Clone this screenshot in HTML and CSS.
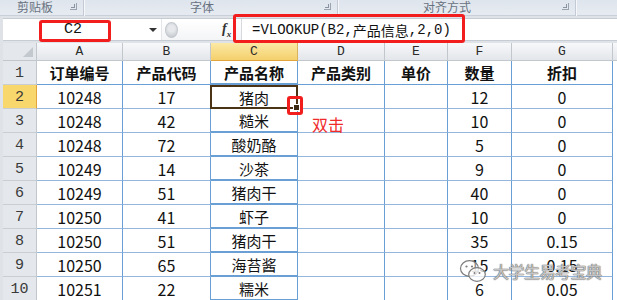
FILE: index.html
```html
<!DOCTYPE html>
<html lang="zh">
<head>
<meta charset="utf-8">
<link rel="stylesheet" href="styles.css">
</head>
<body>
<div class="app">
  <div class="ribbon">
    <div class="grp g1"><span class="glabel">剪贴板</span><span class="launch"></span></div>
    <div class="grp g2"><span class="glabel">字体</span><span class="launch"></span></div>
    <div class="grp g3"><span class="glabel">对齐方式</span><span class="launch"></span></div>
    <div class="grp g4"></div>
  </div>
  <div class="fbar">
    <div class="namebox"><span class="nbtext">C2</span><span class="dd"></span></div>
    <div class="fctrl"><span class="knob"></span><span class="fx">f<sub>x</sub></span></div>
    <div class="formula">=VLOOKUP(B2,<span class="cjk">产品信息</span>,2,0)</div>
  </div>
  <div class="sheet">
    <div class="corner"></div><div class="ch">A</div><div class="ch">B</div><div class="ch ch-sel">C</div><div class="ch">D</div><div class="ch">E</div><div class="ch">F</div><div class="ch">G</div><div class="ch ch-rest"></div>

    <div class="rh">1</div><div class="c hd">订单编号</div><div class="c hd">产品代码</div><div class="c hd cc">产品名称</div><div class="c hd">产品类别</div><div class="c hd">单价</div><div class="c hd">数量</div><div class="c hd">折扣</div><div class="c rest"></div>

    <div class="rh rh-sel">2</div><div class="c n">10248</div><div class="c n">17</div><div class="c cc sel">猪肉</div><div class="c"></div><div class="c"></div><div class="c n">12</div><div class="c n">0</div><div class="c rest"></div>

    <div class="rh">3</div><div class="c n">10248</div><div class="c n">42</div><div class="c cc">糙米</div><div class="c"></div><div class="c"></div><div class="c n">10</div><div class="c n">0</div><div class="c rest"></div>

    <div class="rh">4</div><div class="c n">10248</div><div class="c n">72</div><div class="c cc">酸奶酪</div><div class="c"></div><div class="c"></div><div class="c n">5</div><div class="c n">0</div><div class="c rest"></div>

    <div class="rh">5</div><div class="c n">10249</div><div class="c n">14</div><div class="c cc">沙茶</div><div class="c"></div><div class="c"></div><div class="c n">9</div><div class="c n">0</div><div class="c rest"></div>

    <div class="rh">6</div><div class="c n">10249</div><div class="c n">51</div><div class="c cc">猪肉干</div><div class="c"></div><div class="c"></div><div class="c n">40</div><div class="c n">0</div><div class="c rest"></div>

    <div class="rh">7</div><div class="c n">10250</div><div class="c n">41</div><div class="c cc">虾子</div><div class="c"></div><div class="c"></div><div class="c n">10</div><div class="c n">0</div><div class="c rest"></div>

    <div class="rh">8</div><div class="c n">10250</div><div class="c n">51</div><div class="c cc">猪肉干</div><div class="c"></div><div class="c"></div><div class="c n">35</div><div class="c n">0.15</div><div class="c rest"></div>

    <div class="rh">9</div><div class="c n">10250</div><div class="c n">65</div><div class="c cc">海苔酱</div><div class="c"></div><div class="c"></div><div class="c n">15</div><div class="c n">0.15</div><div class="c rest"></div>

    <div class="rh">10</div><div class="c n">10251</div><div class="c n">22</div><div class="c cc">糯米</div><div class="c"></div><div class="c"></div><div class="c n">6</div><div class="c n">0.05</div><div class="c rest"></div>
  </div>

  <div class="mark mark-name"></div>
  <div class="mark mark-formula"></div>
  <div class="mark mark-handle"></div>
  <div class="note">双击</div>
  <div class="wm">
    <svg class="wm-icon" width="28" height="24" viewBox="0 0 28 24">
      <ellipse cx="10.5" cy="9.5" rx="9" ry="7.8" fill="rgba(255,255,255,0.5)" stroke="#7d7d7d" stroke-width="1.2"/>
      <ellipse cx="18" cy="15.5" rx="8.3" ry="6.8" fill="rgba(255,255,255,0.75)" stroke="#7d7d7d" stroke-width="1.2"/>
      <circle cx="7.5" cy="7.5" r="1.1" fill="#7d7d7d"/>
      <circle cx="13" cy="7.5" r="1.1" fill="#7d7d7d"/>
      <circle cx="15.5" cy="14" r="1" fill="#7d7d7d"/>
      <circle cx="20.5" cy="14" r="1" fill="#7d7d7d"/>
    </svg>
    <span class="wm-text">大学生易考宝典</span>
  </div>
</div>
</body>
</html>
```
FILE: styles.css
```css
* { box-sizing: border-box; }
html, body { margin: 0; padding: 0; }
body {
  width: 617px;
  height: 300px;
  overflow: hidden;
  background: #dfe3e8;
  font-family: "Noto Sans CJK SC", "Noto Sans", sans-serif;
}
.app {
  position: relative;
  width: 617px;
  height: 300px;
  overflow: hidden;
}

/* ribbon group labels */
.ribbon {
  display: flex;
  height: 16px;
  background: linear-gradient(#dfe5ed, #e6ebf1);
  border-bottom: 1px solid #c9d0d9;
}
.grp {
  position: relative;
  height: 16px;
  border-right: 1px solid #c3cad3;
  box-shadow: 1px 0 0 #f5f7fa;
}
.g1 { width: 84px; }
.g2 { width: 254px; }
.g3 { width: 238px; }
.g4 { flex: 1; border-right: none; box-shadow: none; }
.glabel {
  display: block;
  font-size: 12px;
  line-height: 14px;
  color: #68727f;
  margin-top: 0;
}
.g1 .glabel { padding-left: 17px; }
.g2 .glabel { padding-left: 106px; }
.g3 .glabel { padding-left: 85px; }
.launch {
  position: absolute;
  right: 6px;
  top: 3px;
  width: 7px;
  height: 7px;
  border-right: 1px solid #9aa3ae;
  border-bottom: 1px solid #9aa3ae;
}
.launch::after {
  content: "";
  position: absolute;
  left: 1px;
  top: 1px;
  width: 3px;
  height: 3px;
  border-right: 1px solid #8a939f;
  border-bottom: 1px solid #8a939f;
}

/* formula bar */
.fbar {
  display: flex;
  height: 23px;
  margin-top: 2px;
  margin-left: 3px;
  background: #ffffff;
  border-top: 1px solid #c6ccd4;
  border-bottom: 1px solid #c6ccd4;
}
.namebox {
  position: relative;
  width: 158px;
  display: flex;
  align-items: center;
}
.nbtext {
  width: 140px;
  text-align: center;
  font-family: "Liberation Mono", monospace;
  font-size: 15px;
  color: #111;
}
.dd {
  width: 0;
  height: 0;
  border-left: 4px solid transparent;
  border-right: 4px solid transparent;
  border-top: 4px solid #333;
  margin-left: 6px;
}
.fctrl {
  width: 80px;
  display: flex;
  align-items: center;
  border-left: 1px solid #e3e6ea;
  background: linear-gradient(#ffffff, #f4f5f7);
}
.knob {
  width: 13px;
  height: 16px;
  margin-left: 3px;
  border-radius: 50%;
  border: 1px solid #c2c7cd;
  background: radial-gradient(circle at 50% 40%, #e6e8eb 30%, #c9cdd2 80%);
}
.fx {
  margin-left: 44px;
  font-family: "Liberation Serif", serif;
  font-style: italic;
  font-weight: bold;
  font-size: 14px;
  color: #333;
}
.fx sub { font-size: 9px; }
.formula {
  flex: 1;
  padding-left: 10px;
  display: flex;
  align-items: center;
  font-family: "Liberation Mono", monospace;
  font-size: 14px;
  color: #111;
  border-left: 1px solid #d6dae0;
}
.formula .cjk {
  font-family: "Noto Sans CJK SC", sans-serif;
  font-size: 14px;
}

/* sheet */
.sheet {
  margin-top: 2px;
  margin-left: 3px;
  display: grid;
  grid-template-columns: 34px 86px 88px 87px 87px 63px 64px 101px 1fr;
  grid-template-rows: 18px repeat(10, 24px);
  background: #ffffff;
}
.corner {
  position: relative;
  background: #e4e7eb;
  border-right: 1px solid #c2c7ce;
  border-bottom: 1px solid #c2c7ce;
}
.corner::after {
  content: "";
  position: absolute;
  right: 3px;
  bottom: 3px;
  width: 0;
  height: 0;
  border-left: 10px solid transparent;
  border-bottom: 10px solid #c3c8cf;
}
.ch {
  display: flex;
  align-items: center;
  justify-content: center;
  font-family: "Liberation Mono", monospace;
  font-size: 13px;
  color: #2b2b2b;
  background: linear-gradient(#f7f8fa, #e3e6ea);
  border-right: 1px solid #c2c7ce;
  border-bottom: 1px solid #c2c7ce;
}
.ch-sel {
  background: linear-gradient(#fbe9a4, #f4d06c);
  border-bottom: 1px solid #e2a43c;
  border-right: 1px solid #d8b25c;
}
.ch-rest { border-right: none; background: linear-gradient(#f7f8fa, #e3e6ea); }
.rh {
  display: flex;
  align-items: center;
  justify-content: center;
  padding-top: 2px;
  font-family: "Liberation Mono", monospace;
  font-size: 15px;
  color: #3a3a3a;
  background: #e4e7eb;
  border-right: 1px solid #c2c7ce;
  border-bottom: 1px solid #c9ced4;
}
.rh-sel {
  background: #f8d76c;
  border-right: 1px solid #e2a43c;
}
.c {
  display: flex;
  align-items: center;
  justify-content: center;
  font-size: 15px;
  color: #111;
  border-right: 1px solid #6a9fd6;
  border-bottom: 1px solid #94b6dc;
}
.c.n { font-size: 16px; }
.c.hd { font-weight: bold; border-bottom: 1px solid #6a9fd6; }
.c.cc { border-bottom: 2px solid #6a9fd6; }
.c.rest { border-right: none; border-bottom: none; background: #ffffff; }
.c.sel {
  position: relative;
  border: 2px solid #4b3416;
  margin-left: -1px;
}
.c.sel::after {
  content: "";
  position: absolute;
  right: -4px;
  bottom: -4px;
  width: 5px;
  height: 5px;
  background: #3b2a14;
  border: 1px solid #ffffff;
}

/* annotations */
.mark {
  position: absolute;
  border: 3px solid #f21d1d;
  border-radius: 3px;
}
.mark-name { left: 39px; top: 20px; width: 72px; height: 22px; }
.mark-formula { left: 233px; top: 14px; width: 232px; height: 29px; }
.mark-handle { left: 287px; top: 96px; width: 16px; height: 19px; }
.note {
  position: absolute;
  left: 312px;
  top: 112px;
  font-size: 16px;
  color: #f02a2a;
}
.wm {
  position: absolute;
  left: 459px;
  top: 259px;
  display: flex;
  align-items: center;
  gap: 6px;
}
.wm-text {
  font-size: 16px;
  letter-spacing: -0.5px;
  color: rgba(255, 255, 255, 0.6);
  text-shadow: 0 0 1px #6f6f6f, 0 0 1px #6f6f6f, 0 0 1px #6f6f6f;
}
```
